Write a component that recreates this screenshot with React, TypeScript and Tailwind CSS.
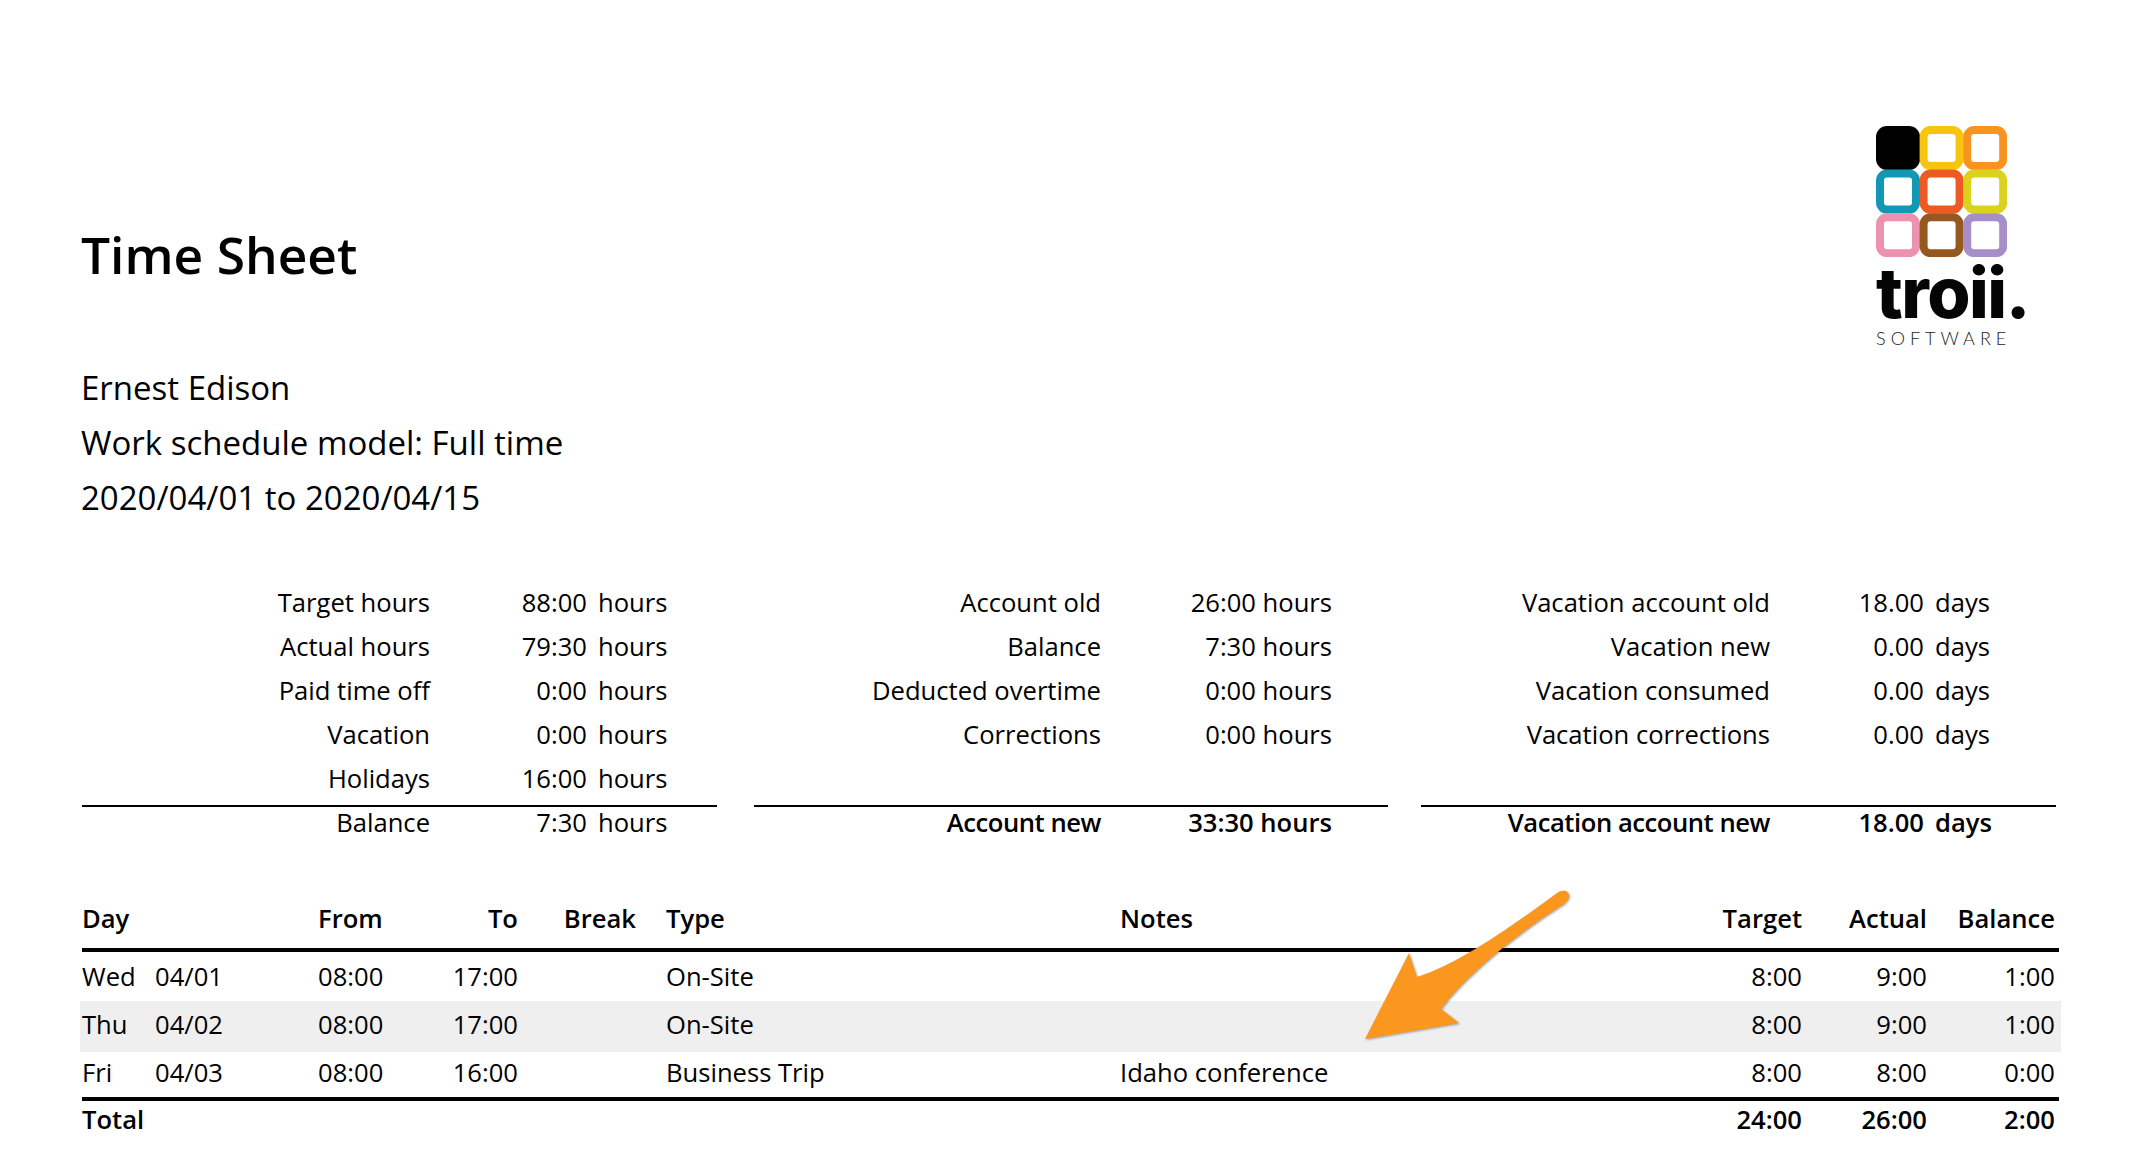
// Time sheet report page: header with logo, three summary blocks, day table.

type StatRow = { label: string; value: string; unit?: string };

const hoursRows: StatRow[] = [
  { label: "Target hours", value: "88:00", unit: "hours" },
  { label: "Actual hours", value: "79:30", unit: "hours" },
  { label: "Paid time off", value: "0:00", unit: "hours" },
  { label: "Vacation", value: "0:00", unit: "hours" },
  { label: "Holidays", value: "16:00", unit: "hours" },
];

const accountRows: StatRow[] = [
  { label: "Account old", value: "26:00 hours" },
  { label: "Balance", value: "7:30 hours" },
  { label: "Deducted overtime", value: "0:00 hours" },
  { label: "Corrections", value: "0:00 hours" },
];

const vacationRows: StatRow[] = [
  { label: "Vacation account old", value: "18.00", unit: "days" },
  { label: "Vacation new", value: "0.00", unit: "days" },
  { label: "Vacation consumed", value: "0.00", unit: "days" },
  { label: "Vacation corrections", value: "0.00", unit: "days" },
];

const days = [
  { day: "Wed", date: "04/01", from: "08:00", to: "17:00", type: "On-Site", notes: "", target: "8:00", actual: "9:00", balance: "1:00", h: "h-[49px] pt-[1px]", bg: "" },
  { day: "Thu", date: "04/02", from: "08:00", to: "17:00", type: "On-Site", notes: "", target: "8:00", actual: "9:00", balance: "1:00", h: "h-[51px] pb-[2px]", bg: "bg-[#efefef]" },
  { day: "Fri", date: "04/03", from: "08:00", to: "16:00", type: "Business Trip", notes: "Idaho conference", target: "8:00", actual: "8:00", balance: "0:00", h: "h-[45px] pb-[2px]", bg: "" },
];

const tableCols = "grid grid-cols-[73px_163px_100px_100px_118px_484px_580px_102px_125px_128px] items-center pl-[2px]";

function Stat({ row, bold, h = "h-11" }: { row: StatRow; bold?: boolean; h?: string }) {
  const weight = bold ? "font-semibold" : "";
  return (
    <>
      <div className={`flex ${h} items-center justify-end ${weight} ${bold ? "tracking-[-0.45px]" : ""}`}>{row.label}</div>
      <div className={`flex ${h} items-center justify-end ${weight}`}>{row.value}</div>
      <div className={`flex ${h} items-center pl-[11px] ${weight}`}>{row.unit}</div>
    </>
  );
}

function StatBlock({
  rows,
  total,
  bold,
  cols,
  className,
}: {
  rows: StatRow[];
  total: StatRow;
  bold?: boolean;
  cols: string;
  className: string;
}) {
  return (
    <div className={className}>
      <div className={`grid h-[224px] content-start ${cols}`}>
        {rows.map((r) => (
          <Stat key={r.label} row={r} />
        ))}
      </div>
      <div className={`grid border-t-2 border-black ${cols}`}>
        <Stat row={total} bold={bold} h="h-[32px]" />
      </div>
    </div>
  );
}

function Logo() {
  const cells = [
    ["#f7c510", 1, 0],
    ["#f9931f", 2, 0],
    ["#1298b5", 0, 1],
    ["#ee5a24", 1, 1],
    ["#dbd21b", 2, 1],
    ["#ec92ae", 0, 2],
    ["#95591f", 1, 2],
    ["#a68fc9", 2, 2],
  ] as const;
  return (
    <div className="mr-[106px] mt-[126px] flex w-[148px] flex-col">
      <svg width="131" height="131" viewBox="0 0 131 131" className="block">
        <rect width="44" height="44" rx="11" fill="#000" />
        {cells.map(([c, x, y]) => (
          <rect key={c} x={x * 43.6 + 4} y={y * 43.6 + 4} width="36" height="36" rx="7" fill="#fff" stroke={c} strokeWidth="8" />
        ))}
      </svg>
      <div className="mt-[3px] h-[66px] font-['Inter'] text-[70px] font-extrabold leading-[66px] tracking-[-1.5px] text-[#050505]">troii.</div>
      <div className="mt-[2px] font-['Lato'] text-[18px] font-light leading-[20px] tracking-[5px] text-[#222]">SOFTWARE</div>
    </div>
  );
}

function Arrow() {
  return (
    <svg
      width="215"
      height="165"
      viewBox="0 0 215 165"
      className="absolute left-[1360px] top-[885px] drop-shadow-[1px_1px_1px_rgba(0,0,0,0.35)]"
    >
      {/* coordinates are relative to (1360,885) */}
      <path
        d="M5 154 L49 68 L57 92 C 95 80 140 50 197 8 C 203 4 209 6 209 11 C 209 14 207 16 204 19 C 155 50 105 92 81 124 L99 138 Z"
        fill="#fb971f"
      />
    </svg>
  );
}

export default function App() {
  return (
    <div className="relative h-[1162px] w-[2130px] overflow-hidden bg-white font-['Open_Sans',sans-serif] text-[25.6px] text-black">
      <header className="flex items-start justify-between pl-[81px]">
        <div>
          <h1 className="mt-[221px] text-[51.5px] font-semibold leading-[66px]">Time Sheet</h1>
          <div className="mt-[73px] text-[33px] leading-[55px]">
            <div>Ernest Edison</div>
            <div>Work schedule model: Full time</div>
            <div>2020/04/01 to 2020/04/15</div>
          </div>
        </div>
        <Logo />
      </header>

      <section className="absolute left-0 top-[581px] flex w-full pl-[82px]">
        <StatBlock
          className="w-[635px]"
          cols="grid-cols-[348px_157px_130px]"
          rows={hoursRows}
          total={{ label: "Balance", value: "7:30", unit: "hours" }}
        />
        <StatBlock
          className="ml-[37px] w-[634px]"
          cols="grid-cols-[347px_231px_56px]"
          rows={accountRows}
          bold
          total={{ label: "Account new", value: "33:30 hours" }}
        />
        <StatBlock
          className="ml-[33px] w-[635px]"
          cols="grid-cols-[349px_154px_132px]"
          rows={vacationRows}
          bold
          total={{ label: "Vacation account new", value: "18.00", unit: "days" }}
        />
      </section>

      <section className="absolute left-[80px] top-[896px] w-[1981px]">
        <div className={`${tableCols} h-[52px] pb-[6px] font-semibold`}>
          <div>Day</div>
          <div />
          <div>From</div>
          <div className="text-right">To</div>
          <div className="text-right">Break</div>
          <div className="pl-[30px]">Type</div>
          <div>Notes</div>
          <div className="text-right">Target</div>
          <div className="text-right">Actual</div>
          <div className="text-right">Balance</div>
        </div>
        <div className="mx-[2px] h-1 bg-black" />
        {days.map((d) => (
          <div key={d.day} className={`${tableCols} ${d.h} ${d.bg}`}>
            <div>{d.day}</div>
            <div>{d.date}</div>
            <div>{d.from}</div>
            <div className="text-right">{d.to}</div>
            <div />
            <div className="pl-[30px]">{d.type}</div>
            <div>{d.notes}</div>
            <div className="text-right">{d.target}</div>
            <div className="text-right">{d.actual}</div>
            <div className="text-right">{d.balance}</div>
          </div>
        ))}
        <div className="mx-[2px] h-1 bg-black" />
        <div className={`${tableCols} h-[38px] font-semibold`}>
          <div>Total</div>
          <div />
          <div />
          <div />
          <div />
          <div />
          <div />
          <div className="text-right">24:00</div>
          <div className="text-right">26:00</div>
          <div className="text-right">2:00</div>
        </div>
      </section>

      <Arrow />
    </div>
  );
}
